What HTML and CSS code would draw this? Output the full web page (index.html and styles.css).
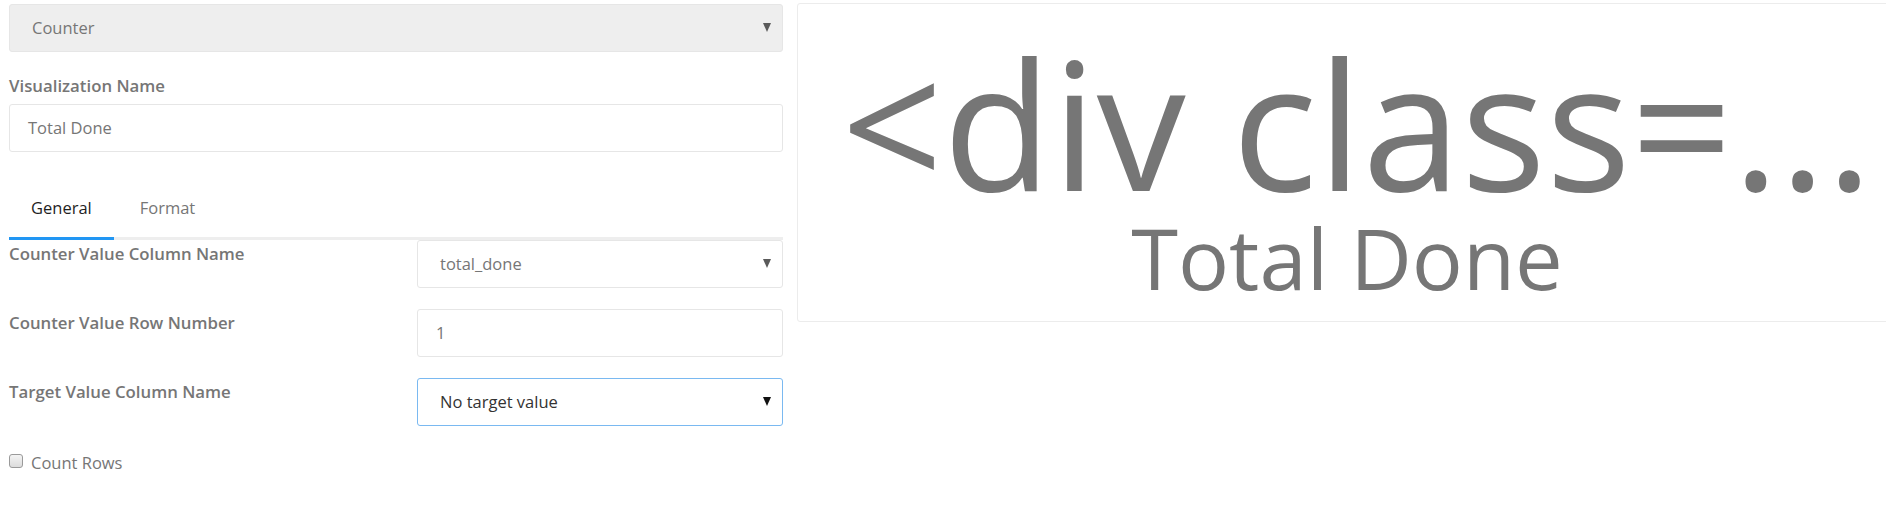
FILE: index.html
```html
<!DOCTYPE html>
<html>
<head>
<meta charset="utf-8">
<link rel="stylesheet" href="styles.css">
</head>
<body>
<div class="page">
  <div class="editor">
    <div class="select select-disabled">
      <span class="select-value">Counter</span>
      <span class="arrow arrow-grey"></span>
    </div>
    <label class="field-label">Visualization Name</label>
    <div class="input"><span class="input-value">Total Done</span></div>

    <div class="tabs">
      <div class="tab tab-active">General</div>
      <div class="tab">Format</div>
    </div>

    <div class="form-row">
      <div class="row-label">Counter Value Column Name</div>
      <div class="select">
        <span class="select-value">total_done</span>
        <span class="arrow arrow-grey"></span>
      </div>
    </div>
    <div class="form-row">
      <div class="row-label">Counter Value Row Number</div>
      <div class="input"><span class="input-value">1</span></div>
    </div>
    <div class="form-row">
      <div class="row-label">Target Value Column Name</div>
      <div class="select select-focused">
        <span class="select-value select-value-dark">No target value</span>
        <span class="arrow arrow-black"></span>
      </div>
    </div>
    <div class="checkbox-row">
      <span class="checkbox"></span>
      <span class="checkbox-label">Count Rows</span>
    </div>
  </div>

  <div class="preview">
    <div class="counter-value">&lt;div class=...</div>
    <div class="counter-name">Total Done</div>
  </div>
</div>
</body>
</html>
```

FILE: styles.css
```css
html, body {
  margin: 0;
  padding: 0;
  background: #ffffff;
  overflow: hidden;
}

body {
  font-family: "Open Sans", "Noto Sans", sans-serif;
  font-size: 16.5px;
  color: #767676;
}

.page {
  display: flex;
  align-items: flex-start;
  padding: 3px 0 0 9px;
  gap: 14px;
  width: 2000px;
}

.editor {
  width: 774px;
  flex: none;
  display: flex;
  flex-direction: column;
}

.select {
  box-sizing: border-box;
  height: 48px;
  border: 1px solid #e6e6e6;
  border-radius: 3px;
  background: #fff;
  display: flex;
  align-items: center;
  justify-content: space-between;
  padding: 0 11px 0 22px;
  line-height: 22px;
}

.select-disabled {
  background: #eeeeee;
  border-color: #e6e6e6;
  margin-top: 1px;
}

.select-focused {
  border-color: #7ab9f1;
}

.select-value {
  color: #767676;
}

.select-value-dark {
  color: #333333;
}

.arrow {
  width: 0;
  height: 0;
  border-left: 4px solid transparent;
  border-right: 4px solid transparent;
  border-top: 9px solid #555;
  margin-top: -2px;
}

.arrow-grey {
  border-top-color: #5a5a5a;
}

.arrow-black {
  border-top-color: #111;
}

.field-label {
  display: block;
  font-weight: 600;
  font-size: 16.8px;
  line-height: 22px;
  margin-top: 23px;
  color: #767676;
}

.input {
  box-sizing: border-box;
  height: 48px;
  border: 1px solid #e6e6e6;
  border-radius: 3px;
  background: #fff;
  display: flex;
  align-items: center;
  padding: 0 18px;
  line-height: 22px;
  margin-top: 7px;
}

.input-value {
  color: #767676;
}

.tabs {
  display: flex;
  margin-top: 37px;
  border-bottom: 3px solid #eeeeee;
  gap: 4px;
}

.tab {
  padding: 8px 22px 18px;
  line-height: 22px;
  color: #767676;
  margin-bottom: -3px;
  border-bottom: 3px solid transparent;
}

.tab-active {
  color: #1f1f1f;
  border-bottom-color: #2196f3;
}

.form-row {
  display: grid;
  grid-template-columns: 408px 366px;
  margin-bottom: 21px;
}

.form-row .input {
  margin-top: 0;
}

.row-label {
  font-weight: 600;
  font-size: 16.8px;
  line-height: 22px;
  padding-top: 3px;
  color: #767676;
}

.checkbox-row {
  display: flex;
  align-items: center;
  gap: 8px;
  margin-top: 5px;
  line-height: 22px;
}

.checkbox {
  box-sizing: border-box;
  width: 14px;
  height: 14px;
  border: 1px solid #9a9a9a;
  border-radius: 3px;
  background: linear-gradient(#f4f4f4, #dcdcdc);
  margin-top: -4px;
}

.checkbox-label {
  color: #767676;
}

.preview {
  box-sizing: border-box;
  width: 1120px;
  flex: none;
  border: 1px solid #ececec;
  border-radius: 3px;
  padding: 29px 0 21px;
  text-align: center;
  overflow: hidden;
  color: #767676;
}

.counter-value {
  font-size: 178px;
  line-height: 178px;
  white-space: nowrap;
}

.counter-name {
  font-size: 85px;
  line-height: 86px;
  margin-top: 3px;
  padding-right: 20px;
  white-space: nowrap;
}
```
